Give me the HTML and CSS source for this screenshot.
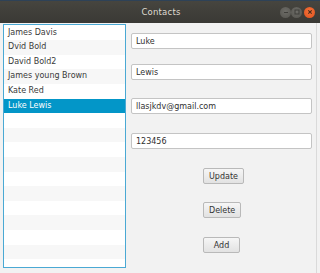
FILE: index.html
```html
<!DOCTYPE html>
<html lang="en">
  <head>
    <meta charset="UTF-8" />
    <title>Contacts</title>
    <link rel="stylesheet" href="styles.css">
  </head>
  <body>
    <div id="window">
      <div id="titlebar">
        <span></span>
        <span class="title">Contacts</span>
        <div class="controls">
          <span class="ctl minimize"><svg width="10" height="10" viewBox="0 0 10 10"><path d="M3 5.5h4" stroke="#3f3e3a" stroke-width="1"/></svg></span>
          <span class="ctl maximize"><svg width="10" height="10" viewBox="0 0 10 10"><rect x="3" y="3" width="4" height="4" fill="none" stroke="#3f3e3a" stroke-width="1"/></svg></span>
          <span class="ctl close"><svg width="10" height="10" viewBox="0 0 10 10"><path d="M3.3 3.3l3.4 3.4M6.7 3.3l-3.4 3.4" stroke="#4a2a1a" stroke-width="1.1"/></svg></span>
        </div>
      </div>

      <div id="content">
        <ul id="contact-list">
          <li>James Davis</li>
          <li>Dvid Bold</li>
          <li>David Bold2</li>
          <li>James young Brown</li>
          <li>Kate Red</li>
          <li class="selected">Luke Lewis</li>
          <li></li>
          <li></li>
          <li></li>
          <li></li>
          <li></li>
          <li></li>
          <li></li>
          <li></li>
          <li></li>
          <li></li>
          <li></li>
        </ul>

        <div id="form">
          <input type="text" class="field first-name" value="Luke" />
          <input type="text" class="field last-name" value="Lewis" />
          <input type="text" class="field email" value="llasjkdv@gmail.com" />
          <input type="text" class="field phone" value="123456" />

          <div class="actions">
            <button class="update">Update</button>
            <button class="delete">Delete</button>
            <button class="add">Add</button>
          </div>
        </div>

        <div class="edge"></div>
      </div>
    </div>
  </body>
</html>
```

FILE: styles.css
```css
body {
  margin: 0;
  font-family: "DejaVu Sans", Verdana, sans-serif;
  background-color: #f2f2f2;
}
#window {
  width: 320px;
  height: 273px;
  overflow: hidden;
}
#titlebar {
  height: 23px;
  display: grid;
  grid-template-columns: 1fr auto 1fr;
  align-items: center;
  background: linear-gradient(#46453f, #3a3935);
  border-top: 1px solid #2e4257;
  box-sizing: border-box;
}
.title {
  color: #dfdbd2;
  font-size: 8.5px;
  letter-spacing: 0.2px;
  padding-left: 2px;
}
.controls {
  display: flex;
  justify-content: flex-end;
  align-items: center;
  padding-right: 5px;
}
.ctl {
  width: 11px;
  height: 11px;
  border-radius: 50%;
  display: flex;
  align-items: center;
  justify-content: center;
  background: radial-gradient(circle at 50% 40%, #6d6c67, #55544f);
}
.ctl.close {
  margin-left: 2px;
  background: radial-gradient(circle at 50% 40%, #f4733b, #e0501c);
}
#content {
  display: flex;
  height: 250px;
}
#contact-list {
  list-style: none;
  margin: 1px 0 0 3px;
  padding: 0;
  width: 123px;
  height: 244px;
  box-sizing: border-box;
  border: 1px solid #4aa9d4;
  background-color: #ffffff;
  overflow: hidden;
}
#contact-list li {
  height: 14.6px;
  line-height: 14.6px;
  padding-left: 4px;
  font-size: 8px;
  color: #3a3a3a;
  white-space: nowrap;
}
#contact-list li:first-child {
  margin-top: 0.6px;
}
#contact-list li:nth-child(even) {
  background-color: #f7f7f7;
}
#contact-list li.selected {
  background-color: #0396c8;
  color: #ffffff;
}
#form {
  display: flex;
  flex-direction: column;
  margin-left: 5px;
  width: 181px;
}
.field {
  height: 16px;
  box-sizing: border-box;
  margin: 0;
  padding: 0 4px;
  border: 1px solid #c4c4c4;
  border-radius: 2px;
  background-color: #ffffff;
  font-family: "DejaVu Sans", Verdana, sans-serif;
  font-size: 8px;
  color: #303030;
  outline: none;
}
.first-name {
  margin-top: 10px;
}
.last-name {
  margin-top: 15px;
}
.email {
  margin-top: 18px;
}
.phone {
  margin-top: 19px;
}
.actions {
  display: flex;
  flex-direction: column;
  align-items: flex-start;
  margin-left: 72px;
}
.actions button {
  height: 16px;
  min-width: 37px;
  padding: 0 5px;
  border: 1px solid #b9b9b9;
  border-radius: 2px;
  background: linear-gradient(#f6f6f6, #e2e2e2);
  font-family: "DejaVu Sans", Verdana, sans-serif;
  font-size: 8px;
  color: #333333;
}
.update {
  margin-top: 19px;
}
.delete {
  margin-top: 18px;
}
.add {
  margin-top: 19px;
}
.edge {
  margin-left: 4px;
  width: 3px;
  border-left: 1px solid #dadada;
}
```
